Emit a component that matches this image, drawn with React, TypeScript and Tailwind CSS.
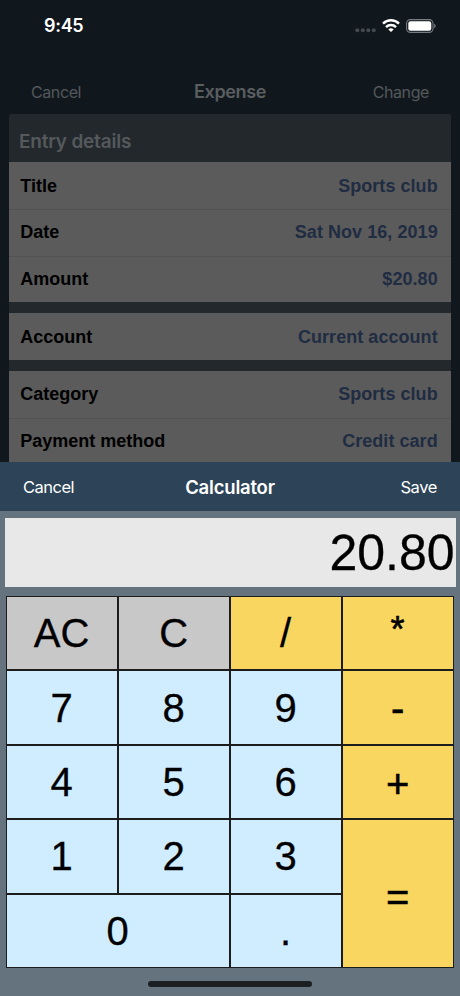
import clsx from "clsx";

const groups = [
  [
    { label: "Title", value: "Sports club" },
    { label: "Date", value: "Sat Nov 16, 2019" },
    { label: "Amount", value: "$20.80" },
  ],
  [{ label: "Account", value: "Current account" }],
  [
    { label: "Category", value: "Sports club" },
    { label: "Payment method", value: "Credit card" },
  ],
];

const keys = [
  { label: "AC", style: "bg-[#c8c8c8]" },
  { label: "C", style: "bg-[#c8c8c8]" },
  { label: "/", style: "bg-[#f9d65f]" },
  { label: "*", style: "bg-[#f9d65f] pb-[6px] text-[36px] [-webkit-text-stroke:0.6px_black]" },
  { label: "7", style: "bg-[#d0edff]" },
  { label: "8", style: "bg-[#d0edff]" },
  { label: "9", style: "bg-[#d0edff]" },
  { label: "-", style: "bg-[#f9d65f] [-webkit-text-stroke:0.6px_black]" },
  { label: "4", style: "bg-[#d0edff]" },
  { label: "5", style: "bg-[#d0edff]" },
  { label: "6", style: "bg-[#d0edff]" },
  { label: "+", style: "bg-[#f9d65f] pt-[5px] [-webkit-text-stroke:0.5px_black]" },
  { label: "1", style: "bg-[#d0edff]" },
  { label: "2", style: "bg-[#d0edff]" },
  { label: "3", style: "bg-[#d0edff]" },
  { label: "=", style: "bg-[#f9d65f] row-span-2 pt-[6px] [-webkit-text-stroke:0.5px_black]" },
  { label: "0", style: "bg-[#d0edff] col-span-2 pt-px" },
  { label: ".", style: "bg-[#d0edff] pt-px" },
];

const StatusBar = () => (
  <div className="flex h-[51px] shrink-0 items-center justify-between pl-[44px] pr-[24px] text-white">
    <span className="pt-px text-[18px] font-semibold leading-none tracking-[-0.3px]">9:45</span>
    <div className="flex items-center">
      <svg width="22" height="14" viewBox="0 0 22 14" fill="#43494e" className="mr-[5px]">
        <circle cx="2.3" cy="11.2" r="2" />
        <circle cx="7.8" cy="11.2" r="2" />
        <circle cx="13.3" cy="11.2" r="2" />
        <circle cx="18.8" cy="11.2" r="2" />
      </svg>
      <svg width="18" height="14" viewBox="0 0 18 14" fill="none" stroke="#fff" strokeWidth="2.4" className="mr-[6px]">
        <path d="M1 4.6a11.4 11.4 0 0 1 16 0" />
        <path d="M4 8.1a7.1 7.1 0 0 1 10 0" />
        <path d="M9 13.1 6.3 10.5a3.9 3.9 0 0 1 5.4 0z" fill="#fff" stroke="none" />
      </svg>
      <svg width="30" height="14" viewBox="0 0 30 14">
        <rect x="0.6" y="0.6" width="26.4" height="12.8" rx="3.8" fill="none" stroke="#777c80" strokeWidth="1.1" />
        <rect x="2.3" y="2.3" width="23" height="9.4" rx="2.2" fill="#fff" />
        <path d="M28.2 4.8c1.9.7 1.9 3.7 0 4.4z" fill="#777c80" />
      </svg>
    </div>
  </div>
);

const App = () => {
  return (
    <div className="flex h-[996px] w-[460px] flex-col overflow-hidden bg-[#10181e] font-[Inter,sans-serif]">
      {/* Dimmed expense form */}
      <div className="flex h-[462px] shrink-0 flex-col overflow-hidden">
        <StatusBar />
        <div className="grid h-[63px] shrink-0 grid-cols-3 items-center pl-[31px] pr-[31px] pt-[18px] text-[16px] text-[#54585b]">
          <span className="tracking-[-0.4px]">Cancel</span>
          <span className="text-center text-[18px] font-semibold tracking-[-0.35px] text-[#5a5e60]">Expense</span>
          <span className="text-right tracking-[-0.4px]">Change</span>
        </div>
        <div className="ml-[9.3px] mr-[9.3px] flex shrink-0 flex-col rounded-t-[2px] bg-[#23282c]">
          <h2 className="flex h-[48.3px] items-center pl-[9.7px] pt-[8px] text-[19px] font-semibold tracking-[-0.2px] text-[#55595c]">
            Entry details
          </h2>
          <div className="flex flex-col gap-[11px] font-['Liberation_Sans',sans-serif]">
            {groups.map((rows, i) => (
              <div key={i} className="bg-[#5b5b5b]">
                {rows.map((row, j) => (
                  <div
                    key={row.label}
                    className={clsx(
                      "flex h-[46.7px] items-center justify-between pl-[11px] pr-[13px] text-[18px] font-bold",
                      j > 0 ? "border-t border-[#505356]" : "pt-px"
                    )}
                  >
                    <span className="text-black">{row.label}</span>
                    <span className="tracking-[0.05px] text-[#1f2c42]">{row.value}</span>
                  </div>
                ))}
              </div>
            ))}
          </div>
        </div>
      </div>

      {/* Calculator sheet */}
      <div className="flex flex-1 flex-col bg-[#64737e]">
        <div className="grid h-[49px] shrink-0 grid-cols-3 items-center bg-[#2d4458] pl-[23px] pr-[23px] pt-[2px] text-[16.5px] text-white">
          <button className="text-left tracking-[-0.5px]">Cancel</button>
          <span className="text-center text-[18.5px] font-semibold tracking-[-0.2px]">Calculator</span>
          <button className="text-right tracking-[-0.4px]">Save</button>
        </div>
        <div className="mx-[4.5px] mt-[7px] flex h-[69px] shrink-0 items-center justify-end bg-[#e8e8e8] pr-px pt-px font-['Liberation_Sans',sans-serif] text-[50px] leading-none text-black [-webkit-text-stroke:0.3px_black]">
          20.80
        </div>
        <div className="ml-[5.6px] mt-[9px] grid h-[372px] w-[448px] shrink-0 grid-cols-4 grid-rows-5 font-['Liberation_Sans',sans-serif] text-[40px] leading-none text-black [-webkit-text-stroke:0.3px_black]">
          {keys.map((key) => (
            <button key={key.label} className={clsx("flex items-center justify-center border border-[#1c1c1c]", key.style)}>
              {key.label}
            </button>
          ))}
        </div>
        <div className="mx-auto mt-[13px] h-[6px] w-[164px] rounded-full bg-[#1c1f21]" />
      </div>
    </div>
  );
};

export default App;
